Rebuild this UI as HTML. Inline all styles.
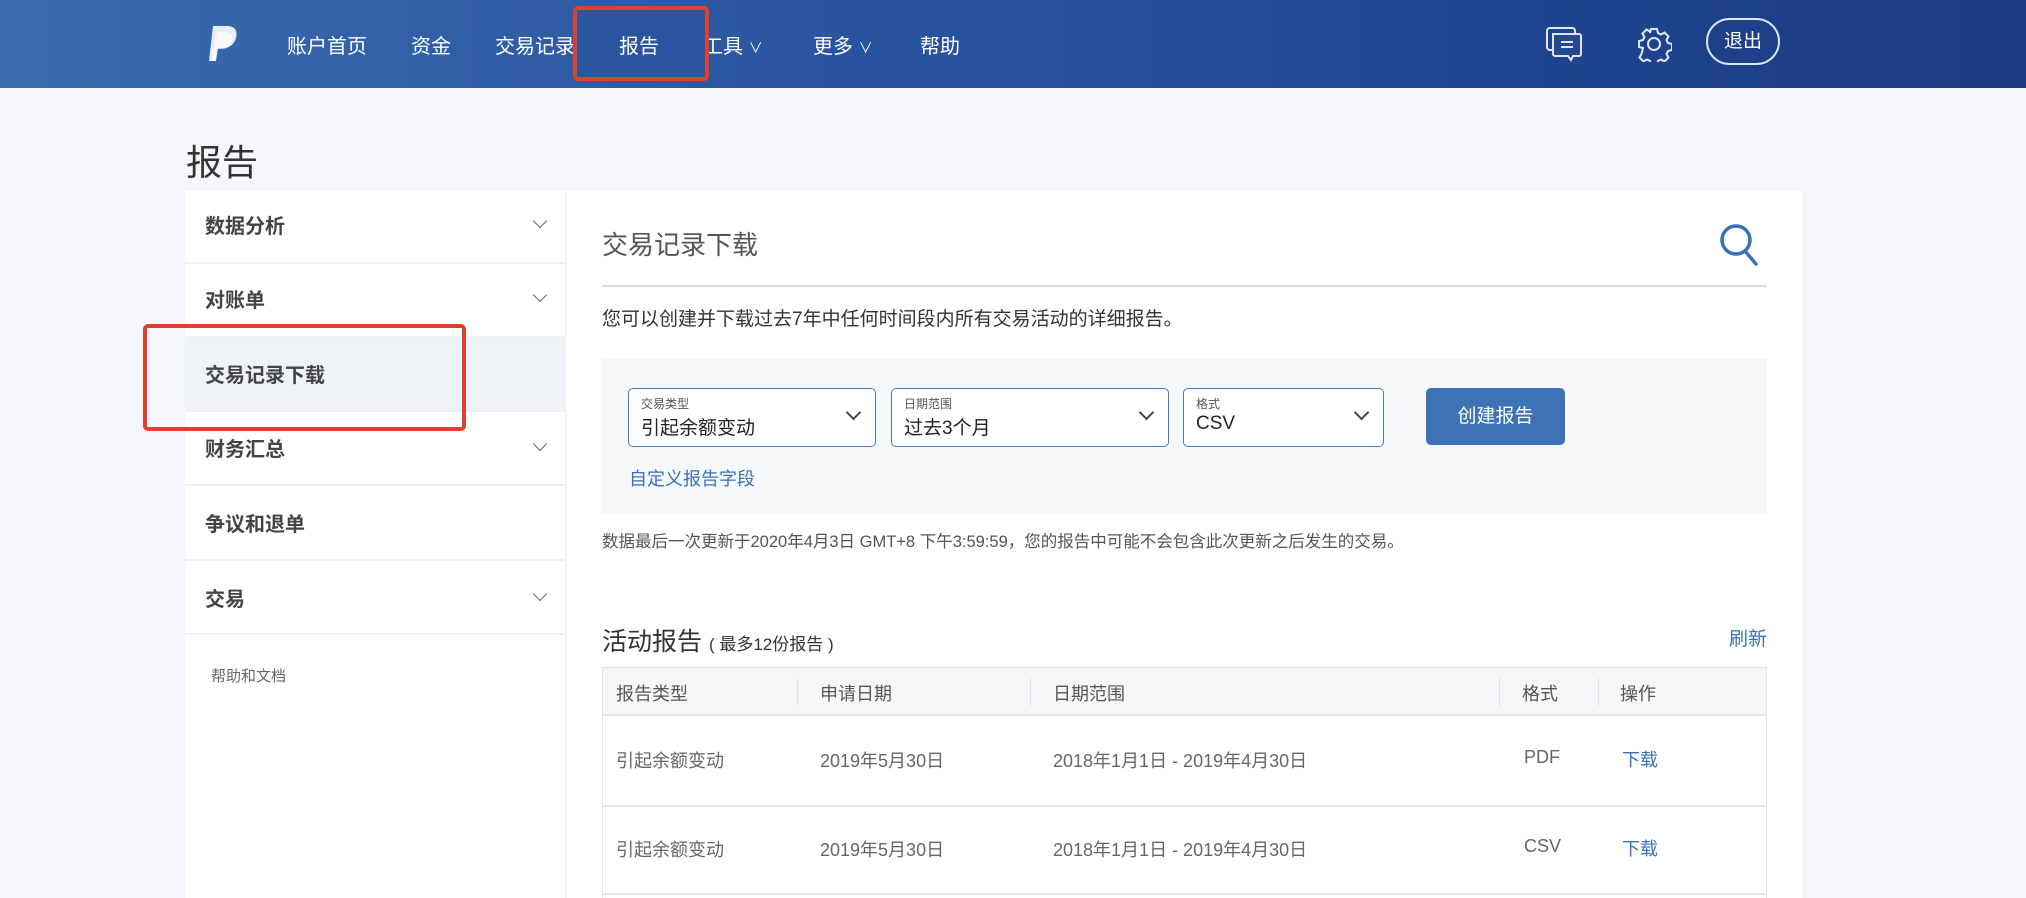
<!DOCTYPE html>
<html><head><meta charset="utf-8"><style>
*{margin:0;padding:0;box-sizing:border-box}
body{width:2026px;height:898px;overflow:hidden;background:#f4f6f9;font-family:"Liberation Sans","Noto Sans CJK SC",sans-serif;position:relative}
.a{position:absolute;white-space:nowrap}
.hdr{position:absolute;left:0;top:0;width:2026px;height:88px;background:linear-gradient(90deg,#3a6cae 0%,#2a55a0 40%,#1f4590 75%,#1b3a82 100%)}
.nav{color:#fff;font-size:20px;top:30px}
.side{font-size:20px;font-weight:bold;color:#444;left:205px}
.chev{position:absolute;left:535px;width:10px;height:10px;border-right:1.5px solid #666;border-bottom:1.5px solid #666;transform:rotate(45deg)}
.sdiv{position:absolute;left:185px;width:380px;height:2px;background:#eef0f3}
.sel{position:absolute;top:388px;height:59px;border:1.5px solid #4a7bb7;border-radius:5px;background:#fff}
.sel .l{position:absolute;left:12px;top:6px;font-size:12px;color:#555}
.sel .v{position:absolute;left:12px;top:24px;font-size:19px;color:#222}
.sel .c{position:absolute;right:16px;top:18px;width:11px;height:11px;border-right:2px solid #444;border-bottom:2px solid #444;transform:rotate(45deg)}
.th{font-size:18px;color:#555;top:680px}
.td{font-size:18px;color:#666}
.red{position:absolute;border:4px solid #e0402f;border-radius:5px}
</style></head><body>
<div class="hdr"></div>
<svg class="a" style="left:203px;top:24px" width="40" height="40" viewBox="0 0 40 40"><path d="M10 2h14c8 0 11 5 9 12-2 7-7 10-13 10h-5l-2 13H6z" fill="#e8eef8"/><path d="M14 8h9c5 0 8 4 6 10-2 5-6 7-11 7h-4l-2 12h-3z" fill="#fff" opacity=".7"/></svg>
<div class="a nav" style="left:287px">账户首页</div>
<div class="a nav" style="left:411px">资金</div>
<div class="a nav" style="left:495px">交易记录</div>
<div class="a nav" style="left:703px">工具 <span style="font-size:14px">∨</span></div>
<div class="a nav" style="left:813px">更多 <span style="font-size:14px">∨</span></div>
<div class="a nav" style="left:920px">帮助</div>
<div class="red" style="left:573px;top:6px;width:136px;height:75px;background:#2a559f"></div>
<div class="a nav" style="left:619px">报告</div>
<svg class="a" style="left:1545px;top:26px" width="38" height="36" viewBox="0 0 38 36" fill="none" stroke="#dfe6f2" stroke-width="2"><rect x="2" y="2" width="28" height="22" rx="3"/><path d="M8 8h26a2 2 0 0 1 2 2v18a2 2 0 0 1-2 2h-6l-2 4-3-4H10a2 2 0 0 1-2-2z" fill="#25498f"/><path d="M16 16h12M16 21h12"/></svg>
<svg class="a" style="left:1636px;top:26px" width="36" height="36" viewBox="0 0 36 36" fill="none" stroke="#dfe6f2" stroke-width="2"><circle cx="18" cy="18" r="6"/><path d="M15 3h6l1 4 3 1.5 3.5-2 4 4-2 3.5 1.5 3 4 1v6l-4 1-1.5 3 2 3.5-4 4-3.5-2-3 1.5-1 4h-6l-1-4-3-1.5-3.5 2-4-4 2-3.5L7 22l-4-1v-6l4-1 1.5-3-2-3.5 4-4 3.5 2L14 7z"/></svg>
<div class="a" style="left:1706px;top:18px;width:74px;height:47px;border:2px solid #dfe6f2;border-radius:24px;color:#fff;font-size:19px;text-align:center;line-height:43px">退出</div>

<div class="a" style="left:186px;top:134px;font-size:36px;color:#333">报告</div>

<div class="a" style="left:185px;top:191px;width:380px;height:707px;background:#fff"></div>
<div class="a" style="left:567px;top:191px;width:1235px;height:707px;background:#fff"></div>
<div class="a" style="left:185px;top:336px;width:380px;height:75px;background:#eef3f8"></div>
<div class="a side" style="top:210px">数据分析</div><div class="chev" style="top:216px"></div>
<div class="sdiv" style="top:262px"></div>
<div class="a side" style="top:284px">对账单</div><div class="chev" style="top:290px"></div>
<div class="sdiv" style="top:336px"></div>
<div class="a side" style="top:359px">交易记录下载</div>
<div class="sdiv" style="top:410px"></div>
<div class="a side" style="top:433px">财务汇总</div><div class="chev" style="top:439px"></div>
<div class="sdiv" style="top:484px"></div>
<div class="a side" style="top:508px">争议和退单</div>
<div class="sdiv" style="top:559px"></div>
<div class="a side" style="top:583px">交易</div><div class="chev" style="top:589px"></div>
<div class="sdiv" style="top:633px"></div>
<div class="a" style="left:211px;top:665px;font-size:15px;color:#666">帮助和文档</div>
<div class="red" style="left:143px;top:324px;width:323px;height:107px"></div>

<div class="a" style="left:602px;top:225px;font-size:26px;color:#555">交易记录下载</div>
<svg class="a" style="left:1718px;top:222px" width="42" height="46" viewBox="0 0 42 46" fill="none" stroke="#3a73b5" stroke-width="3.5"><circle cx="18" cy="18" r="14"/><path d="M27 29l11 13" stroke-linecap="round"/></svg>
<div class="a" style="left:602px;top:285px;width:1165px;height:2px;background:#d8dbe0"></div>
<div class="a" style="left:602px;top:304px;font-size:19px;color:#333">您可以创建并下载过去7年中任何时间段内所有交易活动的详细报告。</div>
<div class="a" style="left:602px;top:359px;width:1165px;height:155px;background:#f6f7f9"></div>
<div class="sel" style="left:628px;width:248px"><div class="l">交易类型</div><div class="v">引起余额变动</div><div class="c"></div></div>
<div class="sel" style="left:891px;width:278px"><div class="l">日期范围</div><div class="v">过去3个月</div><div class="c"></div></div>
<div class="sel" style="left:1183px;width:201px"><div class="l">格式</div><div class="v">CSV</div><div class="c"></div></div>
<div class="a" style="left:1426px;top:388px;width:139px;height:57px;background:#3d72b4;border-radius:5px;color:#fff;font-size:19px;text-align:center;line-height:57px">创建报告</div>
<div class="a" style="left:629px;top:465px;font-size:18px;color:#3a73b5">自定义报告字段</div>
<div class="a" style="left:602px;top:528px;font-size:16.5px;color:#555">数据最后一次更新于2020年4月3日 GMT+8 下午3:59:59，您的报告中可能不会包含此次更新之后发生的交易。</div>
<div class="a" style="left:602px;top:622px;font-size:25px;color:#333">活动报告 <span style="font-size:17px">( 最多12份报告 )</span></div>
<div class="a" style="left:1729px;top:624px;font-size:19px;color:#3a73b5">刷新</div>

<div class="a" style="left:602px;top:667px;width:1165px;height:231px;border:1.5px solid #e2e5e9;border-bottom:none"></div>
<div class="a" style="left:603px;top:668px;width:1163px;height:48px;background:#f5f6f8;border-bottom:2px solid #e4e6ea"></div>
<div class="a" style="left:797px;top:678px;width:1px;height:28px;background:#e0e2e6"></div>
<div class="a" style="left:1030px;top:678px;width:1px;height:28px;background:#e0e2e6"></div>
<div class="a" style="left:1499px;top:678px;width:1px;height:28px;background:#e0e2e6"></div>
<div class="a" style="left:1598px;top:678px;width:1px;height:28px;background:#e0e2e6"></div>
<div class="a th" style="left:616px">报告类型</div>
<div class="a th" style="left:820px">申请日期</div>
<div class="a th" style="left:1053px">日期范围</div>
<div class="a th" style="left:1522px">格式</div>
<div class="a th" style="left:1620px">操作</div>
<div class="a td" style="left:616px;top:747px">引起余额变动</div>
<div class="a td" style="left:820px;top:747px">2019年5月30日</div>
<div class="a td" style="left:1053px;top:747px">2018年1月1日 - 2019年4月30日</div>
<div class="a td" style="left:1524px;top:747px">PDF</div>
<div class="a td" style="left:1622px;top:746px;color:#3a73b5">下载</div>
<div class="a" style="left:603px;top:805px;width:1163px;height:1.5px;background:#e4e6ea"></div>
<div class="a td" style="left:616px;top:836px">引起余额变动</div>
<div class="a td" style="left:820px;top:836px">2019年5月30日</div>
<div class="a td" style="left:1053px;top:836px">2018年1月1日 - 2019年4月30日</div>
<div class="a td" style="left:1524px;top:836px">CSV</div>
<div class="a td" style="left:1622px;top:835px;color:#3a73b5">下载</div>
<div class="a" style="left:603px;top:893px;width:1163px;height:1.5px;background:#e4e6ea"></div>
</body></html>
